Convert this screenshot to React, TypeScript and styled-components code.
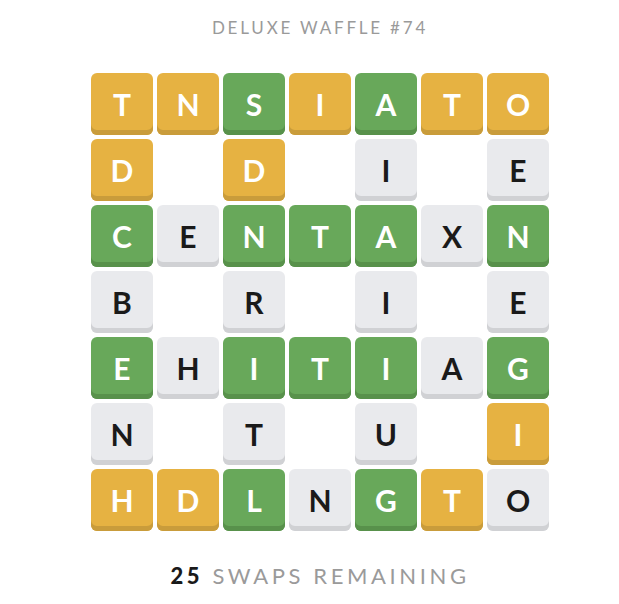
import { createGlobalStyle, styled } from "styled-components";

const GlobalStyle = createGlobalStyle`
  html, body {
    margin: 0;
    padding: 0;
    background: #fff;
  }
  body {
    font-family: "Lato", "Open Sans", sans-serif;
  }
`;

type Tone = "yellow" | "green" | "gray";

const tones: Record<Tone, { bg: string; shade: string; fg: string }> = {
  yellow: { bg: "#e6b242", shade: "#c99c3b", fg: "#fff" },
  green: { bg: "#68a85a", shade: "#58914b", fg: "#fff" },
  gray: { bg: "#e9eaed", shade: "#d0d1d4", fg: "#1a1a1a" },
};

// each cell: letter + tone (y yellow, g green, a gray), "__" for a hole
const rows: string[] = [
  "Ty Ny Sg Iy Ag Ty Oy",
  "Dy __ Dy __ Ia __ Ea",
  "Cg Ea Ng Tg Ag Xa Ng",
  "Ba __ Ra __ Ia __ Ea",
  "Eg Ha Ig Tg Ig Aa Gg",
  "Na __ Ta __ Ua __ Iy",
  "Hy Dy Lg Na Gg Ty Oa",
];

const toneOf = (c: string): Tone => (c === "y" ? "yellow" : c === "g" ? "green" : "gray");

const Page = styled.div`
  display: flex;
  flex-direction: column;
  align-items: center;
  padding: 17px 0 0 21px;
`;

const Title = styled.h1`
  margin: 0;
  font-size: 17px;
  font-weight: 400;
  letter-spacing: 2.8px;
  color: #9a9a9a;
  line-height: 21px;
`;

const Board = styled.div`
  margin-top: 35px;
  display: grid;
  grid-template-columns: repeat(7, 62px);
  grid-auto-rows: 62px;
  gap: 4px;
`;

const Tile = styled.div<{ $tone: Tone }>`
  display: flex;
  align-items: center;
  justify-content: center;
  border-radius: 6px;
  background: ${(p) => tones[p.$tone].bg};
  box-shadow: inset 0 -5px 0 ${(p) => tones[p.$tone].shade};
  color: ${(p) => tones[p.$tone].fg};
  font-size: 30px;
  font-weight: 700;
  padding-bottom: 1px;
  box-sizing: border-box;
`;

const Hole = styled.div``;

const Footer = styled.div`
  margin-top: 31px;
  font-size: 22px;
  letter-spacing: 3.6px;
  color: #9a9a9a;
  line-height: 28px;
  b {
    color: #1a1a1a;
    font-weight: 900;
  }
`;

const App = () => {
  return (
    <Page>
      <GlobalStyle />
      <Title>DELUXE WAFFLE #74</Title>
      <Board>
        {rows.map((row, r) =>
          row.split(" ").map((cell, c) =>
            cell === "__" ? (
              <Hole key={`${r}-${c}`} />
            ) : (
              <Tile key={`${r}-${c}`} $tone={toneOf(cell[1])}>
                {cell[0]}
              </Tile>
            )
          )
        )}
      </Board>
      <Footer>
        <b>25</b> SWAPS REMAINING
      </Footer>
    </Page>
  );
};

export default App;
